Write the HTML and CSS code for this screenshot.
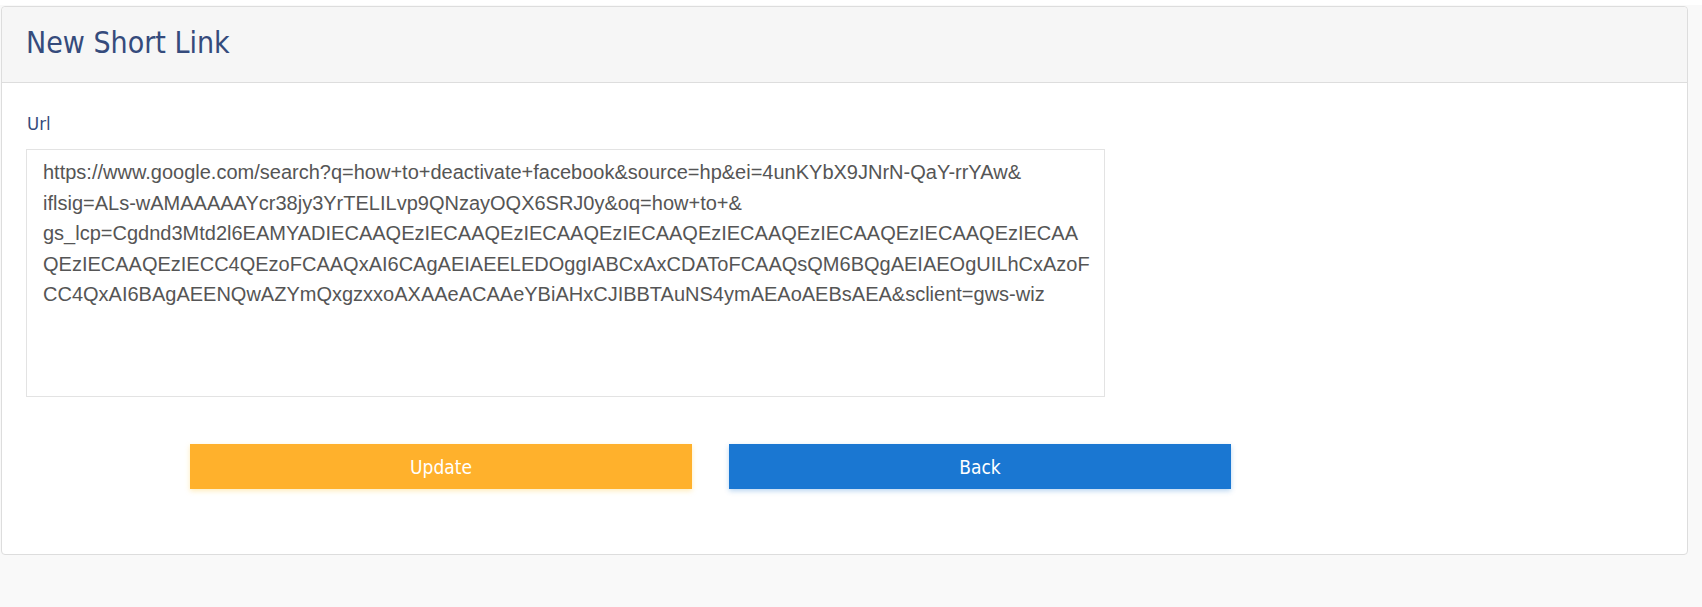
FILE: index.html
```html
<!DOCTYPE html>
<html>
<head>
<meta charset="utf-8">
<link rel="stylesheet" href="styles.css">
</head>
<body>
<div class="topstrip"></div>
<div class="page">
  <div class="card">
    <div class="card-header">
      <h2 class="title">New Short Link</h2>
    </div>
    <div class="card-body">
      <label class="label" for="url">Url</label>
      <textarea id="url" class="url-input" wrap="off">https://www.google.com/search?q=how+to+deactivate+facebook&amp;source=hp&amp;ei=4unKYbX9JNrN-QaY-rrYAw&amp;
iflsig=ALs-wAMAAAAAYcr38jy3YrTELILvp9QNzayOQX6SRJ0y&amp;oq=how+to+&amp;
gs_lcp=Cgdnd3Mtd2l6EAMYADIECAAQEzIECAAQEzIECAAQEzIECAAQEzIECAAQEzIECAAQEzIECAAQEzIECAA
QEzIECAAQEzIECC4QEzoFCAAQxAI6CAgAEIAEELEDOggIABCxAxCDAToFCAAQsQM6BQgAEIAEOgUILhCxAzoF
CC4QxAI6BAgAEENQwAZYmQxgzxxoAXAAeACAAeYBiAHxCJIBBTAuNS4ymAEAoAEBsAEA&amp;sclient=gws-wiz</textarea>
      <div class="actions">
        <button class="btn btn-update">Update</button>
        <button class="btn btn-back">Back</button>
      </div>
    </div>
  </div>
</div>
</body>
</html>
```
FILE: styles.css
```css
* { box-sizing: border-box; }
html, body { margin: 0; padding: 0; }
body {
  background: #f9f9f9;
  font-family: "DejaVu Sans Condensed", "DejaVu Sans", sans-serif;
  height: 607px;
  overflow: hidden;
}
.topstrip { height: 5px; background: #ffffff; }
.page { padding: 1px 14px 0 1px; }
.card {
  background: #fff;
  border: 1px solid #dddddd;
  border-radius: 4px;
  height: 549px;
}
.card-header {
  background: #f6f6f6;
  border-bottom: 1px solid #dddddd;
  border-radius: 4px 4px 0 0;
  height: 76px;
  padding: 0 24px;
  display: flex;
  align-items: center;
  padding-bottom: 5px;
}
.title {
  margin: 0;
  font-weight: normal;
  font-size: 30px;
  color: #354b7c;
}
.card-body { padding: 30px 24px; }
.label {
  display: block;
  font-size: 18.5px;
  color: #354b7c;
  margin: 0 0 14px 1px;
  line-height: 22px;
}
.url-input {
  display: block;
  width: 1079px;
  height: 248px;
  border: 1px solid #e3e3e3;
  border-radius: 0;
  padding: 7px 16px;
  font-family: "Liberation Sans", Arial, sans-serif;
  font-size: 20px;
  line-height: 30.5px;
  color: #555555;
  resize: none;
  outline: none;
  white-space: pre;
  overflow: hidden;
}
.actions {
  display: flex;
  gap: 37px;
  margin: 47px 0 0 164px;
}
.btn {
  width: 502px;
  height: 45px;
  border: 0;
  border-radius: 0;
  color: #ffffff;
  font-family: "DejaVu Sans Condensed", "DejaVu Sans", sans-serif;
  font-size: 19px;
  cursor: pointer;
}
.btn-update {
  background: #ffb12c;
  box-shadow: 0 2px 5px rgba(255, 200, 60, 0.35);
}
.btn-back {
  background: #1a77d2;
  box-shadow: 0 2px 5px rgba(26, 119, 210, 0.3);
}
```
